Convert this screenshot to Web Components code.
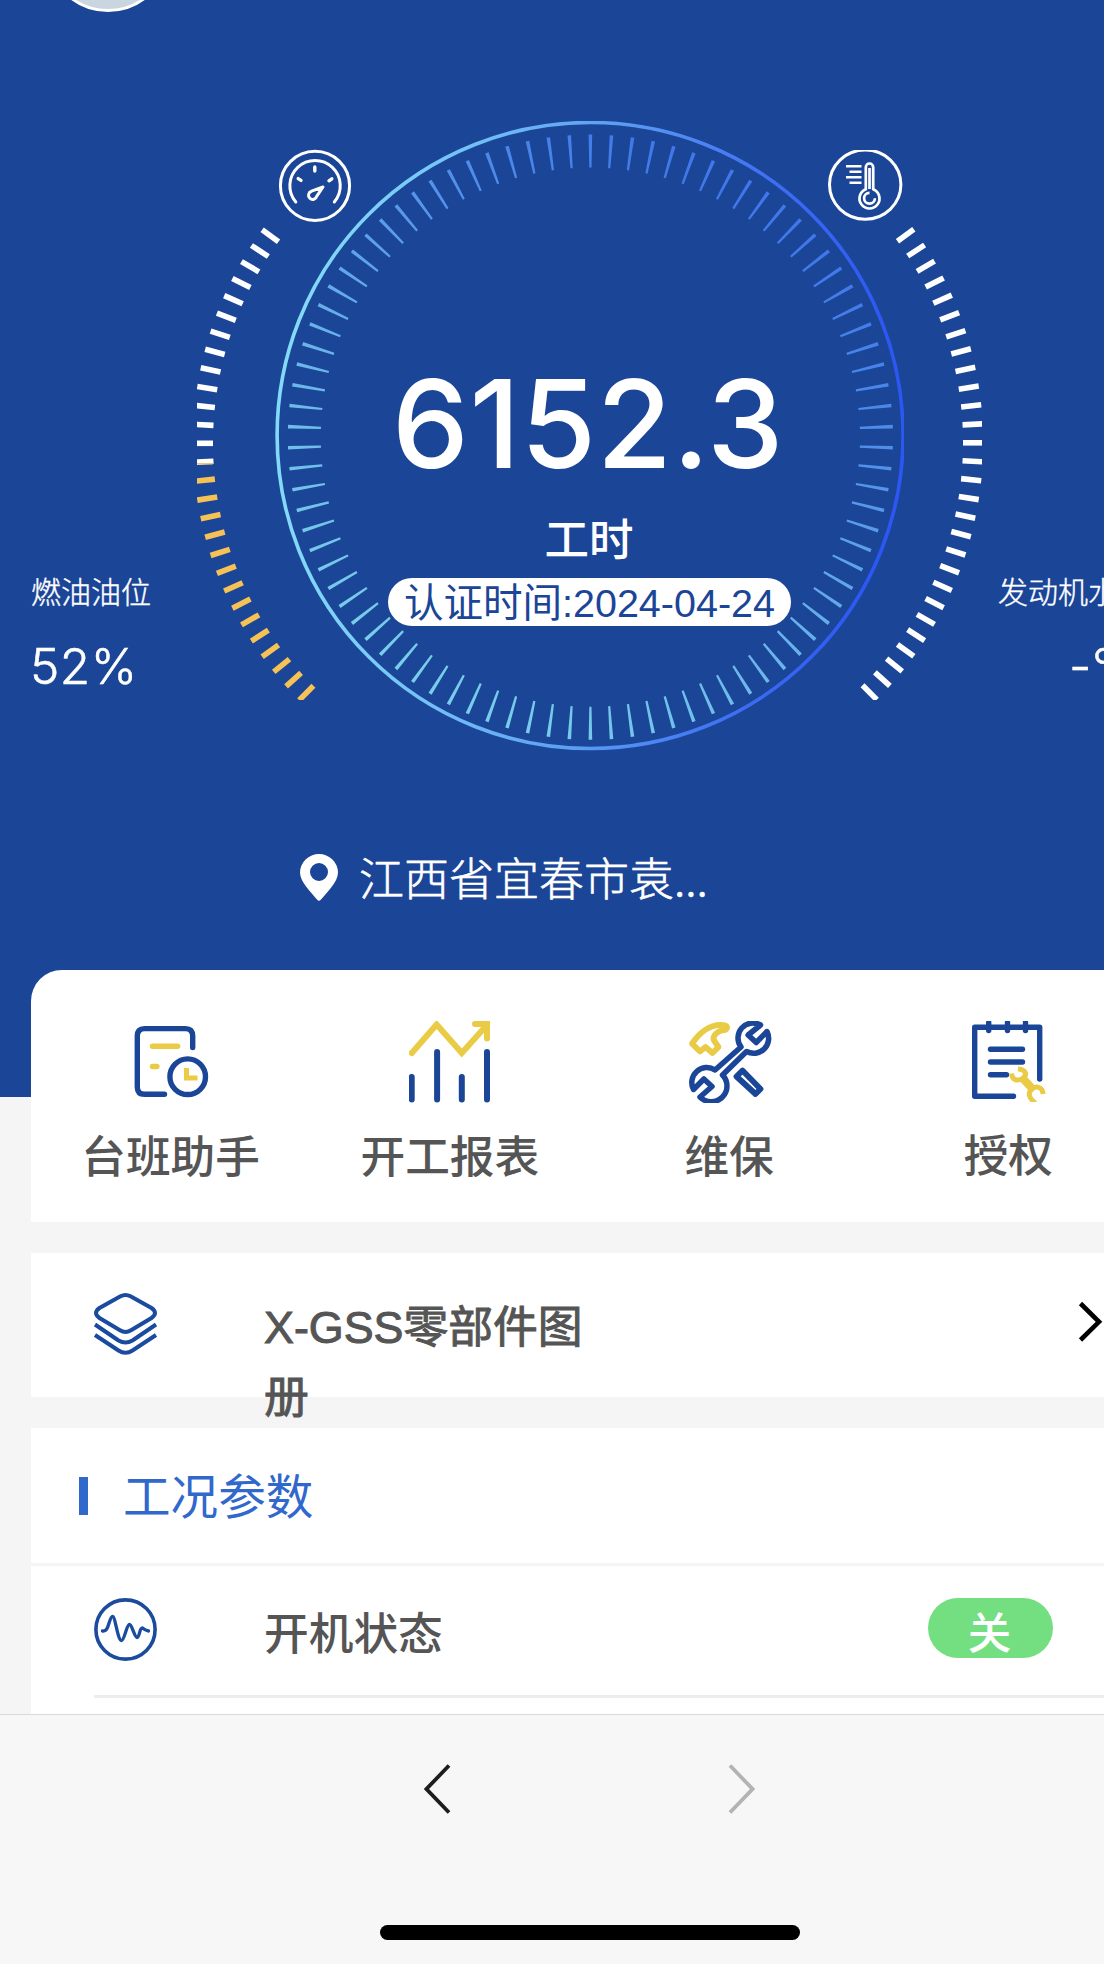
<!DOCTYPE html>
<html lang="zh-CN">
<head>
<meta charset="utf-8">
<title>设备详情</title>
<style>
html,body{margin:0;padding:0}
body{width:1104px;height:1964px;overflow:hidden;background:#f5f5f5;font-family:"Noto Sans CJK SC","Liberation Sans",sans-serif}
</style>
</head>
<body>
<device-page></device-page>
<script>
const define = (name, html, setup) => customElements.define(name, class extends HTMLElement {
  constructor() {
    super();
    const t = document.createElement('template');
    t.innerHTML = html;
    this.attachShadow({mode: 'open'}).append(t.content.cloneNode(true));
  }
  connectedCallback() { if (setup) setup(this, this.shadowRoot); }
});

define('hour-dial', `
<style>:host{display:block;width:1104px;height:1097px}svg{display:block}</style>
<svg width="1104" height="1097" viewBox="0 0 1104 1097" fill="none">
  <defs>
    <linearGradient id="ring" gradientUnits="userSpaceOnUse" x1="300" y1="400" x2="880" y2="440">
      <stop offset="0" stop-color="#83d9f8"/><stop offset=".25" stop-color="#74c2f7"/><stop offset=".5" stop-color="#5c9ff3"/><stop offset=".8" stop-color="#3d6cf3"/><stop offset="1" stop-color="#2c57f3"/>
    </linearGradient>
    <linearGradient id="tick" gradientUnits="userSpaceOnUse" x1="430" y1="680" x2="740" y2="200">
      <stop offset="0" stop-color="#78cdea"/><stop offset=".45" stop-color="#66aeea"/><stop offset="1" stop-color="#4077ea"/>
    </linearGradient>
    <clipPath id="cr"><rect x="270" y="121" width="634" height="640"/></clipPath>
    <clipPath id="cs"><rect x="197" y="150" width="785" height="550"/></clipPath>
  </defs>
  <circle cx="108" cy="-50" r="60.5" fill="#cad6df" stroke="#fff" stroke-width="3"/>
  <circle cx="590.1" cy="435.5" r="313" stroke="url(#ring)" stroke-width="3.6" clip-path="url(#cr)"/>
  <path id="ticks" fill="url(#tick)"/>
  <g id="sides" clip-path="url(#cs)" stroke-width="5.6"></g>
  <g stroke="#fff" stroke-linecap="round">
    <circle cx="315" cy="185.8" r="34.6" stroke-width="3"/>
    <path stroke-width="3" d="M295.8 202A25.2 25.2 0 1 1 334.3 202"/>
    <path stroke-width="3.4" d="M314.8 167V171M298.2 178.6L301 180.4M329 180.8L331.8 178.8"/>
    <path stroke-width="3" stroke-linejoin="round" d="M323 187L311.5 191.2A4.2 4.2 0 1 0 316.8 196.2Z"/>
  </g>
  <g stroke="#fff" stroke-width="3" clip-path="url(#cs)">
    <ellipse cx="865.2" cy="184.6" rx="35.7" ry="34.6"/>
    <path stroke-width="2.700" d="M865.8 189.2V167.2A3.7 3.7 0 0 1 873.2 167.2V189.2A10 10 0 1 1 865.8 189.2ZM869.5 168V189"/>
    <path stroke-width="2.700" d="M869.5 192.8A5.4 5.4 0 1 0 874.9 198.2"/>
    <path stroke-width="2.600" d="M846 166.3H861.5M849.5 171.8H861.5M846 177.3H861.5M849.5 182.7H861.5"/>
  </g>
</svg>`, (el, root) => {
  const rad = d => d * Math.PI / 180;
  let d = '';
  for (let i = 0; i < 90; i++) {
    const a = rad(i * 4 - 90), c = Math.cos(a), s = Math.sin(a);
    const p = (r, w) => (590.4 + r * c - w * s).toFixed(2) + ' ' + (437.2 + r * s + w * c).toFixed(2);
    d += 'M' + p(302.6, 1.8) + 'L' + p(302.6, -1.8) + 'L' + p(269.6, -1.1) + 'L' + p(269.6, 1.1) + 'Z';
  }
  root.getElementById('ticks').setAttribute('d', d);
  const g = root.getElementById('sides');
  const line = (cx, cy, dir, k, color) => {
    const a = rad(k * 3), c = Math.cos(a) * dir, s = Math.sin(a);
    const l = document.createElementNS('http://www.w3.org/2000/svg', 'path');
    l.setAttribute('d', `M${cx + 343 * c} ${cy + 343 * s}L${cx + 363.2 * c} ${cy + 363.2 * s}`);
    l.setAttribute('stroke', color);
    g.append(l);
  };
  for (let k = -12; k <= 15; k++) {
    line(556, 443.3, -1, k, k > 1 ? '#f6c255' : '#fff');
    line(620, 442.8, 1, k, '#fff');
  }
  const edge = document.createElementNS('http://www.w3.org/2000/svg', 'path');
  edge.setAttribute('d', 'M197 463.8H213');
  edge.setAttribute('stroke', '#e8bd62');
  edge.setAttribute('style', 'stroke-width:1.3px');
  g.append(edge);
});

define('side-reading', `
<style>:host{display:flex;flex-direction:column;gap:26px;color:#fff;white-space:nowrap;font-weight:300}
.l{font-size:30px;line-height:40px;-webkit-text-stroke:.4px #fff}.v{font:300 49.5px/60px Inter,"Liberation Sans",sans-serif;letter-spacing:.5px;-webkit-text-stroke:.5px #fff;margin-left:var(--inset,-1px)}</style>
<div class="l"><slot name="label"></slot></div><div class="v"><slot></slot></div>`);

define('hour-readout', `
<style>:host{display:flex;flex-direction:column;align-items:center;color:#fff;white-space:nowrap}
.n{font:500 122px/120px Inter,sans-serif;letter-spacing:.6px;margin-left:-3px}
.u{font-size:44.5px;line-height:52px;font-weight:500;margin:27px 0 15px -1px}
.p{display:flex;justify-content:center;width:403px;height:48px;border-radius:24px;background:#fff;color:#1b4597;font:39.5px/51px "Liberation Sans","Noto Sans CJK SC",sans-serif}</style>
<div class="n"><slot></slot></div><div class="u"><slot name="unit"></slot></div><div class="p"><slot name="cert"></slot></div>`);

define('place-line', `
<style>:host{display:flex;align-items:center;gap:21px;height:56px;color:#fff;font-size:45px;line-height:58px;font-weight:300;white-space:nowrap}
svg{flex:none}span{-webkit-text-stroke:.6px #fff}</style>
<svg width="38" height="47" viewBox="0 0 38 47"><path fill="#fff" fill-rule="evenodd" d="M19 0A19 18.5 0 0 1 38 18.5C38 28 27 38 21 45.6Q19 48 17 45.6C11 38 0 28 0 18.5A19 18.5 0 0 1 19 0ZM19 9A9 9 0 1 0 19 27A9 9 0 1 0 19 9Z"/></svg>
<span><slot></slot></span>`);

define('hero-panel', `
<style>:host{display:grid;height:1097px;background:#1b4597;overflow:hidden}
hour-dial,.fg{grid-area:1/1}
.fg{display:grid;grid-template-columns:357px 403px 1fr;grid-template-rows:206px 279px 56px;padding:364px 0 0 31px;align-content:start}
side-reading{grid-row:1;margin-top:206px}
hour-readout{grid-row:1;grid-column:2}
.r{grid-column:3;margin-left:207px;--inset:71px}
place-line{grid-row:3;grid-column:1/4;margin-left:269px}</style>
<hour-dial></hour-dial>
<div class="fg">
<side-reading><span slot="label">燃油油位</span>52%</side-reading>
<hour-readout>6152.3<span slot="unit">工时</span><span slot="cert">认证时间:2024-04-24</span></hour-readout>
<side-reading class="r"><span slot="label">发动机水温</span>-°C</side-reading>
<place-line>江西省宜春市袁...</place-line>
</div>`);

define('action-item', `
<style>:host{display:flex;flex-direction:column;align-items:center;flex:1;padding-top:51px;gap:20.5px;color:#555;font-size:44.7px;line-height:60px;font-weight:500;white-space:nowrap}
::slotted(svg){display:block;fill:none}</style>
<slot name="icon"></slot><span><slot></slot></span>`);

define('action-card', `
<style>:host{display:flex;box-sizing:border-box;width:1117px;height:251.5px;margin:-127px 0 31px 31px;background:#fff;border-radius:31px 31px 0 0;position:relative}
svg{display:block;fill:none;stroke:#1b4698;stroke-width:5.400;stroke-linecap:round}
.y{stroke:#e9cb45}</style>
<action-item><svg slot="icon" width="100" height="82" viewBox="121.5 1021 100 82">
<path d="M193.2 1047.6V1036Q193.2 1028.6 186 1028.6H145Q137.8 1028.6 137.8 1036V1087Q137.8 1094.3 145 1094.3H165"/>
<circle cx="188.2" cy="1076.7" r="17.8"/><g class="y"><path d="M153 1046.3H178.2M153 1066.5H157.4"/><path stroke-linecap="butt" stroke-width="5" d="M187 1068V1078H198"/></g></svg>台班助手</action-item>
<action-item><svg slot="icon" width="81" height="82" viewBox="409 1021 81 82" style="stroke-width:6">
<path d="M411.7 1077V1099.5M437.1 1052V1099.5M461.8 1077V1099.5M487 1052V1099.5"/><path class="y" d="M411.8 1053L436.6 1024.5L461.8 1053L486 1026M475 1024H487V1038.5"/></svg>开工报表</action-item>
<action-item><svg slot="icon" width="100" height="82" viewBox="679.500 1021 100 82" style="stroke-width:5.800">
<path class="y" stroke-linejoin="round" d="M692.500 1043.7C699 1034 710 1023.500 724 1025.200Q730 1026.500 726 1029.800C715 1031 712 1038 715.5 1042L719 1047L713 1053L706 1047L700.500 1051.500Z"/>
<path stroke-width="5.500" stroke-linejoin="round" d="M761 1025A15 15 0 0 0 741.5 1047L715.5 1070A15 15 0 0 0 694 1089.500L704.4 1079L712.500 1086.500L700.500 1097A15 15 0 0 0 723 1075L747 1051.500A15 15 0 0 0 767.500 1031.500L756.700 1042.500L748.600 1035Z"/>
<path stroke-linejoin="round" d="M743 1070.500L761 1089L756 1094L737 1076.500Z"/></svg>维保</action-item>
<action-item><svg slot="icon" width="100" height="81" viewBox="958.5 1021 100 81" style="stroke-width:5.4">
<path stroke-linejoin="round" d="M1014 1096.300H975.200V1027.300H1040.200V1079M989.200 1022.500V1030.500M1008 1022.500V1030.500M1026 1022.500V1030.500M991 1049.300H1023M991 1062H1023M991 1074.700H1007"/>
<g class="y" stroke-linecap="butt" stroke-width="5"><path d="M1012 1073.500C1013 1082 1020 1080.500 1023 1078.500C1028 1075 1027 1070 1018.500 1068.800M1043.500 1094C1043 1086 1036 1086 1032.500 1089C1028 1092.500 1029 1098 1036 1103"/><path stroke-width="8" d="M1022 1077L1034 1090"/></g></svg>授权</action-item>`);

define('catalog-row', `
<style>:host{display:flex;width:1117px;height:144px;margin:0 0 31px 31px;background:#fff;position:relative;align-items:flex-start}
svg{flex:none;fill:none;stroke:#1b4b9e;stroke-width:4;stroke-linecap:round}
.i{margin:38px 0 0 61px}
.t{width:340px;margin:40.500px 0 0 104px;font:400 44.8px/69.500px "Liberation Sans","Noto Sans CJK SC",sans-serif;color:#555;-webkit-text-stroke:1px #555}
.c{margin:47px 0 0 474px;stroke:#000;stroke-width:4.600;stroke-linecap:butt}</style>
<svg class="i" width="68" height="66" viewBox="92 1291 68 66"><path d="M120.500 1296.300Q125.500 1293.500 130.500 1296.300L151.500 1308Q158.500 1313 151.500 1318L131 1330.300Q125.500 1333.500 120 1330.300L99.500 1318Q92.500 1313 99.500 1308Z"/><path stroke-linecap="butt" d="M95 1324.500L118.500 1340.500Q125.500 1344.500 132.500 1340.500L156 1324.500M95 1335L118.500 1350.500Q125.500 1355 132.500 1350.500L156 1335"/></svg>
<div class="t">X-GSS零部件图册</div>
<svg class="c" width="26" height="44" viewBox="1078 1300 26 44"><path d="M1080.500 1303.500L1099 1321.800L1080.500 1340"/></svg>`);

define('state-pill', `
<style>:host{display:block;width:125px;height:60px;border-radius:30px;background:#74df80;color:#fff;text-align:center;font-size:43.500px;line-height:65px;font-weight:500;text-indent:-2px}</style><slot></slot>`);

define('params-card', `
<style>:host{display:block;width:1117px;height:286px;margin-left:31px;background:#fff;overflow:hidden}
header{display:flex;align-items:center;gap:35px;height:135px;padding-left:48px;border-bottom:3px solid #f5f5f5;color:#3068cc;font-size:47.600px;line-height:60px}
header i{width:9px;height:38px;background:#3068cc;margin-top:2px}
header span{margin-bottom:3px}
.row{display:flex;align-items:flex-start;height:129px;margin-left:63px;border-bottom:3px solid #ededed;padding-top:0}
svg{flex:none;margin-top:32px;fill:none;stroke:#1b4b9e;stroke-width:3.600}
.n{width:664px;margin:35.500px 0 0 107px;color:#555;font-size:44.700px;line-height:60px;font-weight:500}
state-pill{margin-top:32px}</style>
<header><i></i><span><slot></slot></span></header>
<div class="row"><svg width="63" height="63" viewBox="94 1598 63 63"><circle cx="125.500" cy="1629.500" r="29.600"/><path stroke-width="3.300" stroke-linecap="round" stroke-linejoin="round" d="M102.500 1631Q106 1631.500 107.500 1627.500C109 1624 110.500 1616.500 112.500 1616.500C115.500 1616.500 117.500 1640.500 121.500 1640.500C124.500 1640.500 126.500 1624.500 129.500 1624.500C132 1624.500 134.500 1637.500 137.200 1637.500C139.500 1637.500 139.500 1627.500 142.500 1628Q145.500 1630.500 148.500 1631"/></svg>
<div class="n">开机状态</div><state-pill>关</state-pill></div>`);

define('browser-bar', `
<style>:host{display:flex;flex-direction:column;align-items:center;box-sizing:border-box;height:251px;background:#f7f7f7;border-top:1.500px solid #d9d9d9;position:relative}
nav{display:flex;gap:277px;margin:49px 0 0 74px;height:50px}
svg{fill:none;stroke:#1d1d1d;stroke-width:3.800;stroke-linecap:butt;stroke-linejoin:miter}
.off{stroke:#b3b3b3}
.home{width:420px;height:15px;border-radius:8px;background:#000;margin-top:111px;margin-right:-76px}</style>
<nav><svg width="27" height="50" viewBox="0 0 27 50"><path d="M25 1.500L2.500 25L25 48.500"/></svg><svg class="off" width="27" height="50" viewBox="0 0 27 50"><path d="M2 1.500L24.500 25L2 48.500"/></svg></nav>
<div class="home"></div>`);

define('device-page', `
<style>:host{display:block;width:1104px;height:1964px;overflow:hidden;background:#f5f5f5}</style>
<hero-panel></hero-panel><action-card></action-card><catalog-row></catalog-row><params-card>工况参数</params-card><browser-bar></browser-bar>`);
</script>
</body>
</html>
